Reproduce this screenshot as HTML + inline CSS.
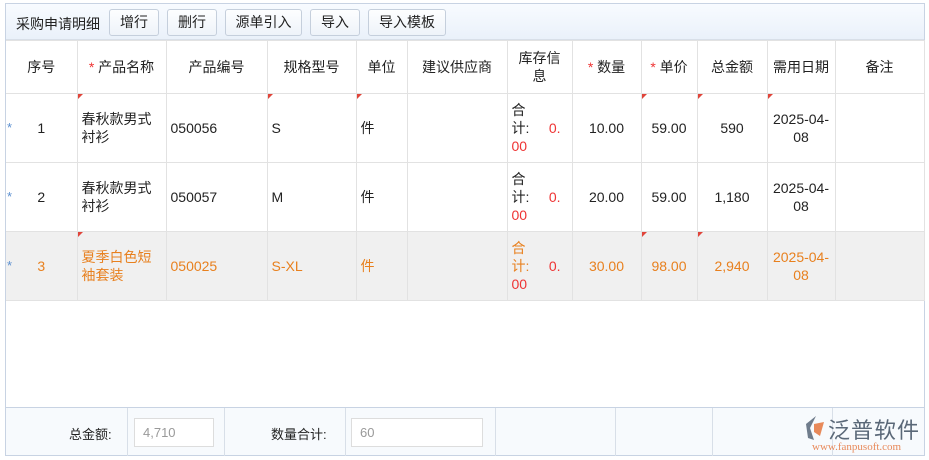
<!DOCTYPE html>
<html><head><meta charset="utf-8"><style>
*{box-sizing:border-box;margin:0;padding:0}
body{width:929px;height:460px;background:#fff;font-family:"Liberation Sans","Noto Sans CJK SC",sans-serif;font-size:13px;color:#222;position:relative;overflow:hidden}
.frame{position:absolute;left:5px;top:3px;width:920px;height:453px;border:1px solid #c8d3e3;background:#fff}
.tb{position:absolute;left:0;top:0;width:918px;height:36px;background:linear-gradient(#f8fbff,#eaf1fa);border-bottom:1px solid #d8dfe8}
.tb .t{position:absolute;left:10px;top:10px;font-size:14px}
.btn{position:absolute;top:5px;height:27px;border:1px solid #c5cfdc;border-radius:3px;background:linear-gradient(#fdfeff,#eef3f9);font-size:14px;line-height:25px;text-align:center}
table{position:absolute;left:0;top:36px;border-collapse:collapse;table-layout:fixed;width:918px}
td,th{border:1px solid #e2e2e2;font-weight:normal;position:relative}
th{height:53px;font-size:14px;text-align:center;line-height:18px}
td{height:69px;font-size:14px;line-height:18px;padding:0 4px}
tr td:first-child,tr th:first-child{border-left:none}
.r{color:#e33}
.o td{color:#e8801e;background:#f0f0f0}
.m{width:0;height:0;border-top:5px solid #e0443a;border-right:5px solid transparent;position:absolute;left:0;top:0}
.star{position:absolute;left:1px;top:25px;color:#5b8fd0;font-size:13px}
.c{text-align:center}
.foot{position:absolute;left:0;top:403px;width:918px;height:48px;background:#f7fafd;border-top:1px solid #c8d3e3}
.fl{position:absolute;top:0;height:48px;border-left:1px solid #d8dfe8}
.in{position:absolute;top:10px;height:29px;border:1px solid #ddd;background:#fff;color:#999;font-size:13px;line-height:27px;padding-left:8px}
</style></head><body>
<div class="frame">
<div class="tb"><span class="t">采购申请明细</span>
<div class="btn" style="left:103px;width:50px">增行</div>
<div class="btn" style="left:161px;width:50px">删行</div>
<div class="btn" style="left:219px;width:77px">源单引入</div>
<div class="btn" style="left:304px;width:50px">导入</div>
<div class="btn" style="left:362px;width:78px">导入模板</div>
</div>
<table>
<colgroup><col style="width:71px"><col style="width:89px"><col style="width:101px"><col style="width:89px"><col style="width:51px"><col style="width:100px"><col style="width:65px"><col style="width:69px"><col style="width:56px"><col style="width:70px"><col style="width:68px"><col style="width:89px"></colgroup>
<tr><th>序号</th><th><span class="r">*</span> 产品名称</th><th>产品编号</th><th>规格型号</th><th>单位</th><th>建议供应商</th><th>库存信<br>息</th><th><span class="r">*</span> 数量</th><th><span class="r">*</span> 单价</th><th>总金额</th><th>需用日期</th><th>备注</th></tr>
<tr><td class="c"><span class="star">*</span>1</td><td><i class="m"></i>春秋款男式<br>衬衫</td><td>050056</td><td><i class="m"></i>S</td><td><i class="m"></i>件</td><td></td><td>合<br>计:&nbsp;&nbsp;&nbsp;&nbsp;&nbsp;<span class="r">0.</span><br><span class="r">00</span></td><td class="c">10.00</td><td class="c"><i class="m"></i>59.00</td><td class="c"><i class="m"></i>590</td><td class="c"><i class="m"></i>2025-04-<br>08</td><td></td></tr>
<tr><td class="c"><span class="star">*</span>2</td><td>春秋款男式<br>衬衫</td><td>050057</td><td>M</td><td>件</td><td></td><td>合<br>计:&nbsp;&nbsp;&nbsp;&nbsp;&nbsp;<span class="r">0.</span><br><span class="r">00</span></td><td class="c">20.00</td><td class="c">59.00</td><td class="c">1,180</td><td class="c">2025-04-<br>08</td><td></td></tr>
<tr class="o"><td class="c"><span class="star">*</span>3</td><td><i class="m"></i>夏季白色短<br>袖套装</td><td>050025</td><td>S-XL</td><td>件</td><td></td><td>合<br>计:&nbsp;&nbsp;&nbsp;&nbsp;&nbsp;<span class="r">0.</span><br><span class="r">00</span></td><td class="c">30.00</td><td class="c"><i class="m"></i>98.00</td><td class="c"><i class="m"></i>2,940</td><td class="c">2025-04-<br>08</td><td></td></tr>
</table>
<div class="foot">
<span style="position:absolute;left:63px;top:16px;font-size:13px">总金额:</span>
<div class="fl" style="left:121px"></div>
<div class="in" style="left:128px;width:80px">4,710</div>
<div class="fl" style="left:218px"></div>
<span style="position:absolute;left:265px;top:16px;font-size:13px">数量合计:</span>
<div class="fl" style="left:339px"></div>
<div class="in" style="left:345px;width:132px">60</div>
<div class="fl" style="left:489px"></div>
<div class="fl" style="left:609px"></div>
<div class="fl" style="left:706px"></div>
<div class="fl" style="left:826px"></div>
<svg style="position:absolute;left:796px;top:6px" width="24" height="28" viewBox="0 0 24 28"><path d="M14 2 L4 10 L6 24 L12 26 L8 14 Z" fill="#6f7c8c"/><path d="M12 10 L22 8 L18 22 L12 18 Z" fill="#e8895a"/></svg>
<span style="position:absolute;left:822px;top:5px;font-size:22px;color:#5a6878;letter-spacing:1px">泛普软件</span>
<span style="position:absolute;left:806px;top:33px;font-size:11px;color:#e8895a;font-family:'Liberation Serif',serif">www.fanpusoft.com</span>
</div>
</div>
</body></html>
